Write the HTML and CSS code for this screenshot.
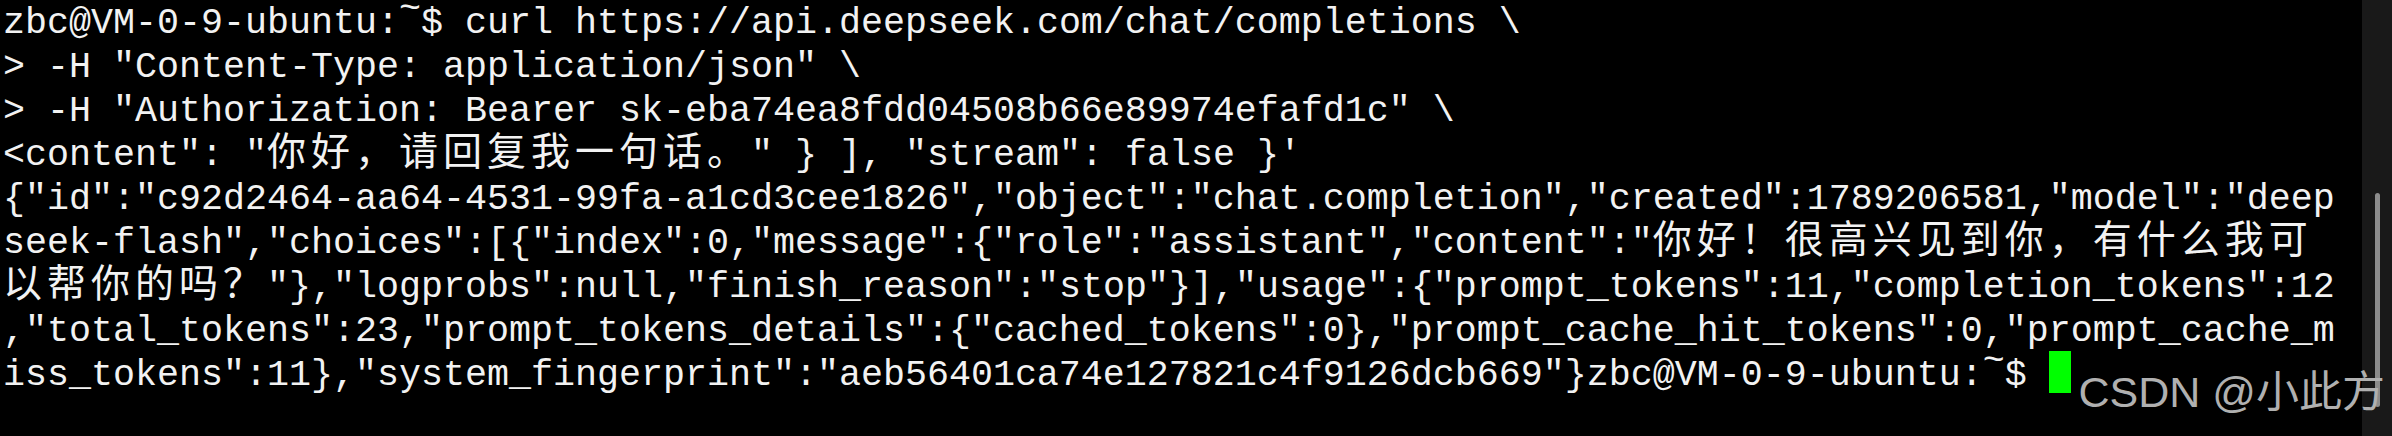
FILE: index.html
```html
<!DOCTYPE html>
<html lang="zh-CN">
<head>
<meta charset="utf-8">
<title>terminal</title>
<link rel="stylesheet" href="styles.css">
</head>
<body>
<div class="window">
  <div class="term">
    <div class="line">zbc@VM-0-9-ubuntu:<span class="tl">~</span>$ curl https://api.deepseek.com/chat/completions \</div>
    <div class="line">&gt; -H "Content-Type: application/json" \</div>
    <div class="line">&gt; -H "Authorization: Bearer sk-eba74ea8fdd04508b66e89974efafd1c" \</div>
    <div class="line">&lt;content": "<span class="cjk">你好，请回复我一句话。</span>" } ], "stream": false }'</div>
    <div class="line">{"id":"c92d2464-aa64-4531-99fa-a1cd3cee1826","object":"chat.completion","created":1789206581,"model":"deep</div>
    <div class="line">seek-flash","choices":[{"index":0,"message":{"role":"assistant","content":"<span class="cjk">你好！很高兴见到你，有什么我可</span></div>
    <div class="line"><span class="cjk">以帮你的吗？</span>"},"logprobs":null,"finish_reason":"stop"}],"usage":{"prompt_tokens":11,"completion_tokens":12</div>
    <div class="line">,"total_tokens":23,"prompt_tokens_details":{"cached_tokens":0},"prompt_cache_hit_tokens":0,"prompt_cache_m</div>
    <div class="line">iss_tokens":11},"system_fingerprint":"aeb56401ca74e127821c4f9126dcb669"}zbc@VM-0-9-ubuntu:<span class="tl">~</span>$ <span class="cursor"></span></div>
  </div>
  <div class="scrollbar"><div class="thumb"></div></div>
  <div class="watermark">CSDN @小此方</div>
</div>
</body>
</html>
```
FILE: styles.css
```css
html, body {
  margin: 0;
  padding: 0;
  background: #000;
}
.window {
  position: relative;
  display: flex;
  width: 2392px;
  height: 436px;
  overflow: hidden;
  background: #000;
}
.term {
  flex: 1;
  display: flex;
  flex-direction: column;
  padding: 1px 0 0 3px;
  font-family: "Liberation Mono", "Noto Sans CJK SC", monospace;
  font-size: 36.66px;
  color: #f2f2f2;
}
.line {
  flex: none;
  height: 44px;
  line-height: 44px;
  white-space: pre;
}
.cjk {
  font-family: "Noto Sans CJK SC", sans-serif;
  font-size: 39px;
  letter-spacing: 5px;
  line-height: 0;
}
.tl {
  vertical-align: 14px;
  line-height: 0;
}
.cursor {
  display: inline-block;
  width: 22px;
  height: 42px;
  margin-top: -10px;
  background: #00ff00;
  vertical-align: -8px;
}
.scrollbar {
  width: 30px;
  flex: none;
  background: #191919;
  display: flex;
  justify-content: center;
  padding-top: 193px;
  box-sizing: border-box;
}
.thumb {
  width: 5px;
  height: 214px;
  border-radius: 3px;
  background: #8c8c8c;
}
.watermark {
  position: absolute;
  right: 7px;
  top: 366px;
  font-family: "Liberation Sans", "Noto Sans CJK SC", sans-serif;
  font-size: 43px;
  line-height: 52px;
  color: #b0b0b0;
  white-space: nowrap;
}
```
